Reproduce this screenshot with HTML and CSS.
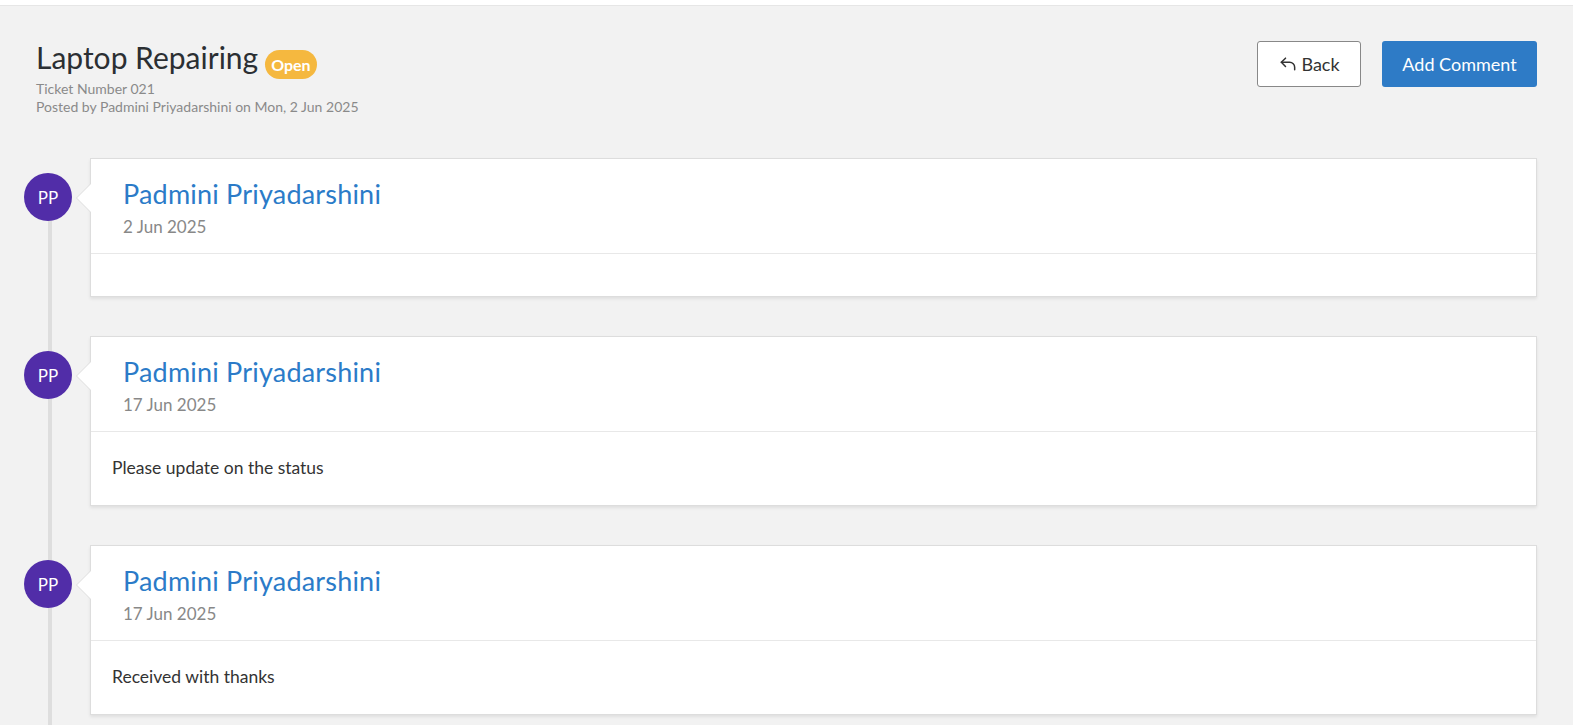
FILE: index.html
```html
<!DOCTYPE html>
<html>
<head>
  <meta charset="utf-8">
  <meta name="viewport" content="width=device-width, initial-scale=1">
  <title>Laptop Repairing</title>
  <link rel="stylesheet" href="styles.css">
</head>
<body>
  <div class="page">
    <div class="ticket-head">
      <div class="ticket-info">
        <h1>Laptop Repairing <span class="badge">Open</span></h1>
        <div class="meta">Ticket Number 021</div>
        <div class="meta">Posted by Padmini Priyadarshini on Mon, 2 Jun 2025</div>
      </div>
      <div class="actions">
        <button class="btn btn-back">
          <svg viewBox="0 0 24 24" width="20" height="20" fill="none" stroke="#333" stroke-width="1.8" stroke-linecap="round" stroke-linejoin="round"><polyline points="9 15 4 10 9 5"/><path d="M20 19v-3a6 6 0 0 0-6-6H4"/></svg>
          Back
        </button>
        <button class="btn btn-primary">Add Comment</button>
      </div>
    </div>

    <div class="timeline">
      <div class="entry">
        <div class="avatar">PP</div>
        <div class="card">
          <div class="card-head">
            <div class="name">Padmini Priyadarshini</div>
            <div class="date">2 Jun 2025</div>
          </div>
          <div class="card-body"></div>
        </div>
      </div>
      <div class="entry">
        <div class="avatar">PP</div>
        <div class="card">
          <div class="card-head">
            <div class="name">Padmini Priyadarshini</div>
            <div class="date">17 Jun 2025</div>
          </div>
          <div class="card-body"><p>Please update on the status</p></div>
        </div>
      </div>
      <div class="entry">
        <div class="avatar">PP</div>
        <div class="card">
          <div class="card-head">
            <div class="name">Padmini Priyadarshini</div>
            <div class="date">17 Jun 2025</div>
          </div>
          <div class="card-body"><p>Received with thanks</p></div>
        </div>
      </div>
    </div>
  </div>
</body>
</html>
```
FILE: styles.css
```css
body {
  margin: 0;
  background: #fff;
  font-family: Lato, 'Open Sans', sans-serif;
  color: #333;
  overflow: hidden;
}

.page {
  width: 1573px;
  box-sizing: border-box;
  margin-top: 5px;
  border-top: 1px solid #e6e6e6;
  background: #f2f2f2;
  padding: 0 36px;
  min-height: 720px;
}

.ticket-head {
  display: flex;
  justify-content: space-between;
  align-items: flex-start;
  padding-top: 33px;
}

h1 {
  margin: 0 0 1px;
  font-size: 30px;
  font-weight: 400;
  line-height: 36px;
  color: #2b2f33;
  display: flex;
  align-items: flex-start;
  gap: 7px;
}

.badge {
  display: inline-block;
  background: #f5b83f;
  color: #fff;
  font-size: 16px;
  font-weight: 700;
  line-height: 29px;
  padding: 0 6px;
  border-radius: 15px;
  margin-top: 11px;
}

.meta {
  font-size: 14px;
  line-height: 18px;
  color: #8a8a8a;
}

.actions {
  display: flex;
  gap: 21px;
  margin-top: 2px;
}

.btn {
  font-family: inherit;
  font-size: 18px;
  height: 46px;
  border-radius: 3px;
  cursor: pointer;
  display: flex;
  align-items: center;
  justify-content: center;
}

.btn-back {
  width: 104px;
  background: #fff;
  border: 1px solid #888;
  color: #333;
  gap: 3px;
}

.btn-primary {
  width: 155px;
  background: #2e7bc6;
  border: none;
  color: #fff;
}

.timeline {
  position: relative;
  margin: 42px 0 0 -12px;
}

.timeline::before {
  content: '';
  position: absolute;
  left: 24px;
  top: 40px;
  bottom: -40px;
  width: 4px;
  background: #dedede;
}

.entry {
  display: grid;
  grid-template-columns: 48px 1fr;
  gap: 18px;
  margin-bottom: 39px;
  position: relative;
}

.avatar {
  width: 48px;
  height: 48px;
  border-radius: 50%;
  background: #512da8;
  color: #fff;
  font-size: 17px;
  display: flex;
  align-items: center;
  justify-content: center;
  margin-top: 15px;
  position: relative;
}

.card {
  background: #fff;
  border: 1px solid #dddddd;
  box-shadow: 0 2px 3px rgba(0, 0, 0, .08);
  position: relative;
}

/* the little pointer toward the avatar */
.card::before,
.card::after {
  content: '';
  position: absolute;
  top: 25px;
  border-style: solid;
  border-color: transparent;
}
.card::before {
  left: -15px;
  border-width: 14px 14px 14px 0;
  border-right-color: #dddddd;
}
.card::after {
  left: -14px;
  border-width: 14px 14px 14px 0;
  border-right-color: #fff;
}

.card-head {
  padding: 19px 32px 15px;
  border-bottom: 1px solid #e8e8e8;
}

.name {
  font-size: 27px;
  line-height: 32px;
  color: #2b7bc8;
  letter-spacing: .2px;
}

.date {
  font-size: 17px;
  line-height: 22px;
  margin-top: 6px;
  color: #888;
}

.card-body {
  padding: 21px;
  font-size: 17.5px;
}

.card-body p {
  margin: 4px 0 5px;
  line-height: 22px;
  color: #333;
}
```
